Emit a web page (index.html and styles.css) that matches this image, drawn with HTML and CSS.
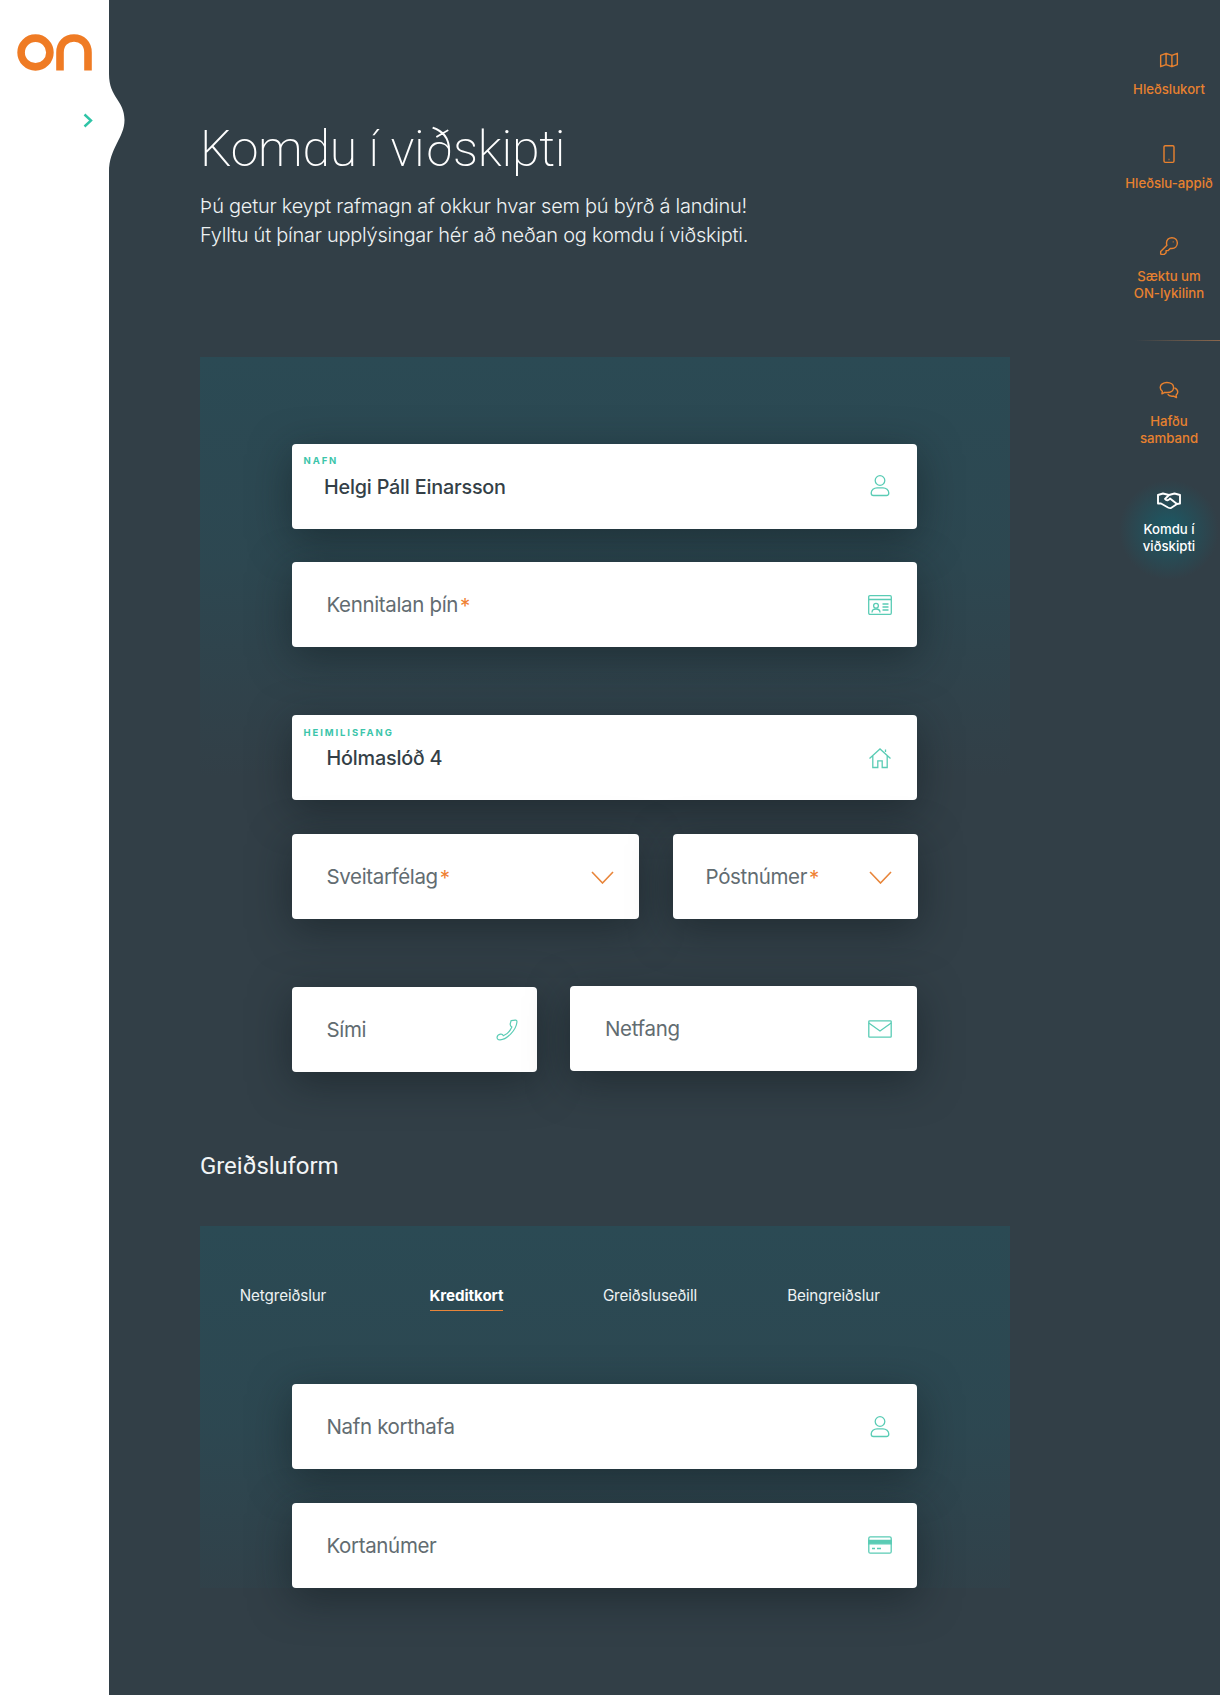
FILE: index.html
```html
<!DOCTYPE html>
<html lang="is">
<head>
<meta charset="utf-8">
<title>Komdu í viðskipti</title>
<link rel="stylesheet" href="styles.css">
</head>
<body>
<div class="page">
  <aside class="brand">
    <svg class="logo" width="76" height="37" viewBox="0 0 76 37" fill="none" stroke="#ef7b24" stroke-width="7.6">
      <circle cx="18.5" cy="18.5" r="14.4"/>
      <path d="M43 36.500V18.500C43 9.500 49 4 57 4S71 9.500 71 18.500V36.500"/>
    </svg>
    <svg class="expand" width="10" height="15" viewBox="0 0 10 15" fill="none" stroke="#2ec4a6" stroke-width="2.4"><path d="M1.500 1.500L8 7.500L1.500 13.500"/></svg>
    <svg class="wave" width="17" height="100" viewBox="0 0 17 100"><path fill="#fff" d="M0 0C0 24 15.500 26 15.500 46C15.500 64 0 74 0 98Z"/></svg>
  </aside>

  <main class="main">
    <h1 class="title">Komdu í viðskipti</h1>
    <p class="intro">Þú getur keypt rafmagn af okkur hvar sem þú býrð á landinu!<br>Fylltu út þínar upplýsingar hér að neðan og komdu í viðskipti.</p>

    <section class="panel panel-details">
      <div class="field">
        <span class="tag">NAFN</span>
        <span class="value value-name">Helgi Páll Einarsson</span>
        <svg class="icon" viewBox="0 0 24 24"><circle cx="12" cy="6.500" r="4.800"/><path d="M5.500 21.500C3.500 21.500 3.200 20.500 3.200 19C3.200 16 6 13.800 9 13.800H15C18 13.800 20.800 16 20.800 19C20.800 20.500 20.500 21.500 18.500 21.500Z"/></svg>
      </div>
      <div class="field">
        <span class="hint">Kennitalan þín<b>*</b></span>
        <svg class="icon icon-wide" viewBox="0 0 24 20"><rect x=".7" y=".7" width="22.600" height="18.600" rx="1.200"/><path d="M.7 4.500H23.300M14.500 9H20.500M14.500 12H20.500M14.500 15H20.500M4 17.500C4 14.800 5.500 14 8 14S12 14.800 12 17.500"/><circle cx="8" cy="10.800" r="2.400"/></svg>
      </div>
      <div class="field field-group">
        <span class="tag">HEIMILISFANG</span>
        <span class="value">Hólmaslóð 4</span>
        <svg class="icon" viewBox="0 0 24 24"><path d="M1.500 12.500L12 3L22.500 12.500M4.800 10V21.500H9.800V14.800H14.200V21.500H19.200V10M17.500 6V3.500"/></svg>
      </div>
      <div class="row row-wide-first">
        <div class="field">
          <span class="hint">Sveitarfélag<b>*</b></span>
          <svg class="caret" viewBox="0 0 23 13"><path d="M1 1L11.500 12L22 1"/></svg>
        </div>
        <div class="field">
          <span class="hint">Póstnúmer<b>*</b></span>
          <svg class="caret" viewBox="0 0 23 13"><path d="M1 1L11.500 12L22 1"/></svg>
        </div>
      </div>
      <div class="row row-wide-last field-group">
        <div class="field field-low">
          <span class="hint">Sími</span>
          <svg class="icon icon-phone" viewBox="0 0 24 24"><path d="M16.500 1.800L21 1.200C22.500 1 23 2 22.800 3.500C22 12 12 22.500 4.500 22.800C2 22.900 1 21.500 1.200 19.800C1.400 18 3 16.800 5 16.500C6.500 16.300 7.500 17 8 18.200C12 16.500 15.800 12.500 17.300 8.800C15.800 8 15.300 6.800 15.500 5.200Z"/></svg>
        </div>
        <div class="field">
          <span class="hint">Netfang</span>
          <svg class="icon icon-wide" viewBox="0 0 24 18"><rect x=".8" y=".8" width="22.400" height="16.400" rx=".8"/><path d="M.8 3L12 11L23.200 3"/></svg>
        </div>
      </div>
    </section>

    <h2 class="subtitle">Greiðsluform</h2>

    <section class="panel panel-payment">
      <div class="tabs">
        <a class="tab">Netgreiðslur</a>
        <a class="tab tab-active">Kreditkort</a>
        <a class="tab">Greiðsluseðill</a>
        <a class="tab">Beingreiðslur</a>
      </div>
      <div class="field">
        <span class="hint">Nafn korthafa</span>
        <svg class="icon" viewBox="0 0 24 24"><circle cx="12" cy="6.500" r="4.800"/><path d="M5.500 21.500C3.500 21.500 3.200 20.500 3.200 19C3.200 16 6 13.800 9 13.800H15C18 13.800 20.800 16 20.800 19C20.800 20.500 20.500 21.500 18.500 21.500Z"/></svg>
      </div>
      <div class="field">
        <span class="hint">Kortanúmer</span>
        <svg class="icon icon-wide" viewBox="0 0 24 18"><rect x=".8" y=".8" width="22.400" height="16.400" rx="1.500"/><path class="fill-band" d="M.8 4.300H23.200V7.800H.8Z"/><path d="M4 12.500H7M9 12.500H13"/></svg>
      </div>
    </section>
  </main>

  <nav class="rail">
    <a class="rail-item">
      <svg viewBox="0 0 24 24"><path d="M2 6.500L8.500 4L15.500 6.500L22 4V17.500L15.500 20L8.500 17.500L2 20ZM8.500 4V17.500M15.500 6.500V20"/></svg>
      <span>Hleðslukort</span>
    </a>
    <a class="rail-item">
      <svg viewBox="0 0 24 24"><rect x="6" y="2" width="12" height="20" rx="1.500"/><path d="M11.500 18.500H12.500"/></svg>
      <span>Hleðslu-appið</span>
    </a>
    <a class="rail-item">
      <svg viewBox="0 0 24 24"><path d="M9 8.500C9 4.500 12 2 15.500 2C19.500 2 22 5 22 8.500C22 12.500 19 15 15.500 15H13.500L11 17.500H8.500V20L6.500 22H3C2.300 22 2 21.700 2 21V18.500L9.500 11C9.200 10.200 9 9.500 9 8.500Z"/><path d="M16.500 7H17.500"/></svg>
      <span>Sæktu um<br>ON-lykilinn</span>
    </a>
    <hr class="rail-rule">
    <a class="rail-item">
      <svg viewBox="0 0 24 24"><path d="M9.500 3C5 3 1.500 5.500 1.500 9C1.500 11 2.500 12.500 4 13.500L3.500 16.500L7 14.800C8 15 9 15 10 15C14.500 15 17.500 12.500 17.500 9S14 3 9.500 3Z"/><path d="M18.500 9.500C21 10.500 22.500 12.500 22.500 14.500C22.500 16 21.800 17.200 20.500 18L21 21L17.500 19.300C14.500 19.800 11.500 18.800 10.500 17"/></svg>
      <span>Hafðu<br>samband</span>
    </a>
    <a class="rail-item rail-active">
      <svg viewBox="0 0 24 20"><path d="M1 5L6 3.500L12 5L17.500 3.500L23 5V13.500L20 14L14 18C13 18.500 12 18 11 17.500L4 13.500H1ZM12 5L8 9C9.500 11 11.500 10.500 13 8.500L20 14"/></svg>
      <span>Komdu í<br>viðskipti</span>
    </a>
  </nav>
</div>
</body>
</html>
```

FILE: styles.css
```css
* { box-sizing: border-box; }
html, body { margin: 0; padding: 0; }
body { font-family: Inter, "Liberation Sans", sans-serif; background: #323f47; color: #fff; }

.page { display: flex; width: 1220px; height: 1695px; overflow: hidden; position: relative; background: #323f47; }

/* Left brand strip */
.brand { position: relative; flex: 0 0 108.500px; background: #fff; padding: 34px 0 0 17px; display: flex; flex-direction: column; z-index: 2; }
.logo { display: block; }
.expand { display: block; margin: 42px 0 0 66px; }
.wave { position: absolute; top: 74px; left: 108.500px; }

/* Main column */
.main { flex: 0 0 1009.500px; padding: 0 0 0 91.500px; }
.title { margin: 119px 0 0; font: 200 50px/60px Roboto, sans-serif; letter-spacing: -.3px; color: #fff; }
.intro { margin: 13px 0 0; font: 300 20px/29px Inter, sans-serif; letter-spacing: -.25px; color: #eef2f3; }
.subtitle { margin: 45.500px 0 0; font: 400 24px/30px Roboto, sans-serif; letter-spacing: -.1px; color: #f2f5f6; }

/* Panels */
.panel { width: 810px; padding: 87px 93px 0 91.500px; background: linear-gradient(180deg, #2b4a54 0, rgba(43, 74, 84, .75) 200px, rgba(43, 74, 84, 0) 420px); }
.panel-details { margin-top: 106.500px; }
.panel-payment { margin-top: 45px; padding-top: 56px; }

/* Fields */
.field { position: relative; display: flex; align-items: center; justify-content: space-between; height: 85px; padding: 0 25px 0 35px; background: #fff; border-radius: 4px; box-shadow: 0 10px 40px rgba(15, 25, 30, .5); margin-bottom: 33.500px; }
.panel-details > .field:first-child { padding-left: 32.500px; }
.field-group { margin-top: 68px; }
.tag { position: absolute; left: 12px; top: 10.500px; font: 700 9.500px/14px Inter, sans-serif; letter-spacing: 1.900px; color: #3cc5aa; }
.value { margin-top: 1px; font: 500 19.800px/26px Inter, sans-serif; letter-spacing: -.2px; color: #343f47; }
.hint { margin-top: 1px; font: 400 20.500px/26px Inter, sans-serif; letter-spacing: -.35px; color: #626c71; }
.hint b { position: relative; top: 1px; margin-left: 2px; font-weight: 400; color: #ef8133; }
.icon { display: block; width: 24px; height: 24px; fill: none; stroke: #5accb5; stroke-width: 1.300; }
.icon-wide { height: 20px; }
.icon-phone { width: 22px; height: 22px; }
.fill-band { fill: #5accb5; }
.caret { display: block; width: 23px; height: 13px; margin-top: 3px; fill: none; stroke: #e8853a; stroke-width: 1.600; }

.row { display: grid; gap: 33.500px; }
.row-wide-first { grid-template-columns: 347.500px 245px; }
.row-wide-last { grid-template-columns: 245px 347px; align-items: start; margin-top: 34px; }
.field-low { margin-top: 1px; padding-right: 19px; }
.row-wide-first .field:last-child { padding-left: 33px; padding-right: 26px; }

/* Tabs */
.tabs { display: grid; grid-template-columns: repeat(4, 150px); column-gap: 33.500px; margin: 0 -80px 0 -83.500px; height: 102px; padding-top: 1px; }
.tab { justify-self: center; align-self: start; height: 28px; font: 400 15.200px/26px Inter, sans-serif; letter-spacing: -.1px; color: #eef3f4; }
.tab-active { font-weight: 700; color: #fff; border-bottom: 1px solid #e8853a; }

/* Right rail */
.rail { flex: 0 0 102px; display: flex; flex-direction: column; align-items: center; padding-top: 50px; position: relative; }
.rail-item { position: relative; display: flex; flex-direction: column; align-items: center; text-align: center; margin-bottom: 46px; font: 500 13.200px/17px Inter, sans-serif; color: #e8812f; }
.rail-item:nth-child(2) { margin-bottom: 44px; }
.rail-item svg { display: block; width: 20px; height: 20px; margin-bottom: 11px; fill: none; stroke: currentColor; stroke-width: 1.700; stroke-linejoin: round; position: relative; }
.rail-item:nth-child(3) svg { margin-bottom: 12px; }
.rail-item:nth-child(3) { margin-bottom: 45px; }
.rail-item:nth-child(5) svg { margin-bottom: 13px; }
.rail-item:nth-child(5) { margin-bottom: 43px; }
.rail-item span { display: block; position: relative; white-space: nowrap; }
.rail-rule { align-self: flex-end; width: 85px; height: 1px; margin: -7px 0 39px; border: 0; background: linear-gradient(90deg, rgba(232, 129, 47, 0), rgba(200, 130, 80, .6)); }
.rail-active { color: #fff; }
.rail-active svg { width: 24px; stroke-width: 1.900; }
.rail-active::before { content: ""; position: absolute; left: 50%; top: -10px; width: 100px; height: 100px; margin-left: -50px; border-radius: 50%; background: radial-gradient(closest-side, #1b5a66 0, rgba(27, 90, 102, .55) 45%, rgba(27, 90, 102, 0) 100%); }
```
